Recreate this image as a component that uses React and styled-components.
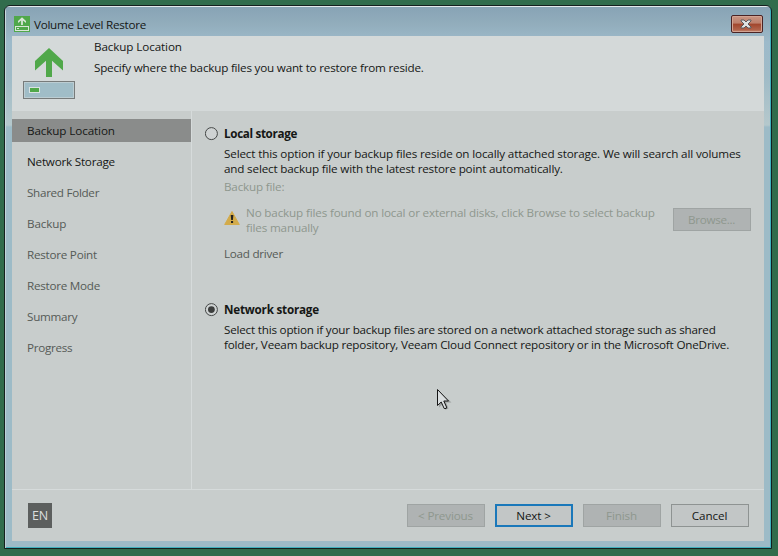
import React from "react";
import styled, { createGlobalStyle } from "styled-components";

const GlobalStyle = createGlobalStyle`
  * { box-sizing: border-box; }
  body {
    margin: 0;
    background: #316c4c;
    color: #151715;
    font: 11.68px/15px "Open Sans", "Noto Sans", sans-serif;
    overflow: hidden;
  }
`;

const Desktop = styled.main`
  height: 556px;
  padding: 5px 6px 7px 4px;
`;

const Window = styled.section`
  display: flex;
  flex-direction: column;
  width: 768px;
  height: 544px;
  padding: 1px 7px 7px;
  border: 1px solid #14201f;
  border-radius: 6px 6px 0 0;
  background:
    linear-gradient(#e3e8ea, #e3e8ea) 0 0 / 100% 1px no-repeat,
    linear-gradient(#c9d8dc, #b9cdd4) 0 0 / 1px 100% no-repeat,
    linear-gradient(#3fb0bd, #3fb0bd) 100% 0 / 1px 100% no-repeat,
    linear-gradient(#3fb0bd, #3fb0bd) 0 100% / 100% 1px no-repeat,
    linear-gradient(#87a3b5 0, #92adbc 18px, #9dbaca 36px, #9fbbc7 70px, #b5c8cc 119px, #9dbbc7 121px);
`;

const TitleBar = styled.header`
  display: flex;
  align-items: flex-start;
  height: 29px;
  padding: 9px 1px 0 2px;
`;

const Text = styled.span`
  display: block;
  white-space: nowrap;
  letter-spacing: ${(p) => p.$track || 0}px;
  font-weight: ${(p) => (p.$bold ? 700 : 400)};
`;

const WindowTitle = styled.h1`
  margin: 1px 0 0 4px;
  flex: 1;
  font: inherit;
`;

const CloseButton = styled.button`
  display: flex;
  align-items: center;
  justify-content: center;
  width: 32px;
  height: 18px;
  margin-top: -1px;
  padding: 0 2px 0 0;
  border: 1px solid #4a2324;
  border-radius: 2px;
  box-shadow: inset 0 0 0 1px #d3a493;
  background: linear-gradient(#c99583 0, #bd7f6b 45%, #a1452c 50%, #b0624a 85%, #c58a74 100%);
`;

const Client = styled.div`
  display: flex;
  flex-direction: column;
  flex: 1;
  width: 752px;
  background: #c8cdcc;
`;

const Banner = styled.div`
  display: flex;
  height: 75px;
  padding: 3px 0 0 11px;
  background: #d4d9d9;
`;

const BannerText = styled.div`
  display: flex;
  flex-direction: column;
  gap: 6px;
  margin-left: 19px;
`;

const Body = styled.div`
  display: grid;
  grid-template-columns: 180px 1fr;
  height: 378px;
`;

const Steps = styled.nav`
  display: flex;
  flex-direction: column;
  gap: 8px;
  padding: 8px 0 0;
  border-right: 1px solid #d6dbdb;
`;

const Step = styled.div`
  height: 23px;
  padding: 4px 0 0 15px;
  color: ${(p) => (p.$state === "todo" ? "#555a56" : "#151715")};
  background: ${(p) => (p.$state === "current" ? "#8a8c8b" : "transparent")};
`;

const Content = styled.div`
  padding: 15px 12px 0 13px;
`;

const Option = styled.div`
  display: grid;
  grid-template-columns: 19px 1fr;
  margin-top: ${(p) => p.$top || 0}px;
`;

const OptionBody = styled.div`
  display: flex;
  flex-direction: column;
`;

const Description = styled.div`
  margin-top: 5px;
`;

const FileLabel = styled.div`
  margin-top: 3px;
  color: #8e978e;
`;

const Notice = styled.div`
  display: flex;
  align-items: flex-start;
  margin-top: 11px;
  color: #8e978e;
`;

const NoticeText = styled.div`
  flex: 1;
  margin-left: 6px;
`;

const DriverLink = styled.div`
  margin-top: 11px;
  color: #555a56;
`;

const Footer = styled.footer`
  display: flex;
  align-items: flex-start;
  height: 52px;
  padding: 14px 15px 0 16px;
  border-top: 1px solid #d6dbdb;
`;

const Language = styled.div`
  width: 24px;
  height: 25px;
  margin: -1px auto 0 0;
  background: #5c5f5e;
  color: #dcdfdf;
  font-size: 12.5px;
  line-height: 25px;
  text-align: center;
`;

const Actions = styled.div`
  display: flex;
  gap: 10px;
`;

const palettes = {
  disabled: { border: "1px solid #9fa4a3", background: "#afb3b3", color: "#8e978e" },
  primary: { border: "2px solid #1a78ba", background: "#c2c6c6", color: "#151715" },
  normal: { border: "1px solid #8e9392", background: "#c2c6c6", color: "#151715" },
};

const Button = styled.button`
  display: flex;
  align-items: center;
  justify-content: center;
  width: 78px;
  height: 23px;
  margin: ${(p) => p.$offset || "0"};
  padding: 0 1px 1px 0;
  font: inherit;
  border: ${(p) => palettes[p.$kind].border};
  background: ${(p) => palettes[p.$kind].background};
  color: ${(p) => palettes[p.$kind].color};
`;

const BannerArt = styled.svg`
  display: block;
  margin-top: 8px;
`;

const NoticeIcon = styled.svg`
  display: block;
  margin-top: 5px;
`;

const RadioMark = styled.svg`
  display: block;
  margin-top: 1px;
`;

const Cursor = styled.svg`
  position: absolute;
  left: 436px;
  top: 388px;
`;

const AppIcon = () => (
  <svg width="16" height="16" viewBox="0 0 16 16">
    <rect width="16" height="16" fill="#50a84a" />
    <path d="M8 1.2 12 5v2L8.9 4.5V9H7.1V4.5L4 7V5z" fill="#d9e6d8" />
    <rect x="1.5" y="10.5" width="13" height="4" fill="none" stroke="#d9e6d8" />
    <rect x="3" y="12" width="2" height="1" fill="#d9e6d8" />
  </svg>
);

const DriveIcon = () => (
  <BannerArt width="52" height="52" viewBox="0 0 52 52">
    <path d="M26 1 40 14v9.500L29 13.800V30H23V13.800L12 23.500V14z" fill="#50a84a" />
    <rect x=".5" y="34.500" width="51" height="17" fill="#a0bdc7" stroke="#777b7a" />
    <rect x="1.500" y="35.500" width="49" height="15" fill="none" stroke="#bccdd2" />
    <rect x="6.500" y="40.500" width="10" height="5" fill="#50a84a" stroke="#d9e2e2" />
  </BannerArt>
);

const CloseGlyph = () => (
  <svg width="12" height="10" viewBox="0 0 12 10">
    <path d="M1 1h3l2 2 2-2h3v1L8 5l3 3v1H8L6 7 4 9H1V8l3-3-3-3z" fill="#dfe2e2" stroke="#5b5a5d" strokeWidth="1" />
  </svg>
);

const Radio = ({ checked }) => (
  <RadioMark width="14" height="14" viewBox="0 0 14 14">
    <circle cx="6.400" cy="6.600" r="6" fill="#cfd3d3" stroke="#454847" />
    {checked && <circle cx="6.400" cy="6.600" r="3.400" fill="#3c3e3d" />}
  </RadioMark>
);

const Warning = () => (
  <NoticeIcon width="16" height="16" viewBox="0 0 16 16">
    <path d="M8 1.500 15.300 14.500H.7z" fill="#d3ab4a" stroke="#d3ab4a" strokeLinejoin="round" />
    <path d="M6.700 5h2.700L8.900 10H7.200zM7 11h2.100v2H7z" fill="#242420" />
  </NoticeIcon>
);

const Pointer = () => (
  <Cursor width="18" height="25" viewBox="0 0 18 25">
    <path d="M3 3v16.500l4-3.800 2.500 6 3-1.200-2.500-6h5.500z" fill="#000" opacity=".22" />
    <path d="M1.500 1.500v16l3.700-3.500 3 6.500h2l.3-1.500-2.700-6h4.700z" fill="#dadedf" stroke="#151515" />
  </Cursor>
);

const steps = [
  { label: "Backup Location", state: "current", track: -0.11 },
  { label: "Network Storage", state: "ready", track: -0.22 },
  { label: "Shared Folder", state: "todo", track: -0.3 },
  { label: "Backup", state: "todo", track: -0.13 },
  { label: "Restore Point", state: "todo", track: -0.25 },
  { label: "Restore Mode", state: "todo", track: -0.26 },
  { label: "Summary", state: "todo", track: -0.27 },
  { label: "Progress", state: "todo", track: -0.29 },
];

export default function App() {
  return (
    <Desktop>
      <GlobalStyle />
      <Window>
        <TitleBar>
          <AppIcon />
          <WindowTitle><Text $track={-0.27}>Volume Level Restore</Text></WindowTitle>
          <CloseButton aria-label="Close"><CloseGlyph /></CloseButton>
        </TitleBar>
        <Client>
          <Banner>
            <DriveIcon />
            <BannerText>
              <Text $track={-0.11}>Backup Location</Text>
              <Text $track={-0.21}>Specify where the backup files you want to restore from reside.</Text>
            </BannerText>
          </Banner>
          <Body>
            <Steps>
              {steps.map((s) => (
                <Step key={s.label} $state={s.state}><Text $track={s.track}>{s.label}</Text></Step>
              ))}
            </Steps>
            <Content>
              <Option>
                <Radio />
                <OptionBody>
                  <Text $bold $track={-0.34}>Local storage</Text>
                  <Description>
                    <Text $track={-0.15}>Select this option if your backup files reside on locally attached storage. We will search all volumes</Text>
                    <Text $track={-0.175}>and select backup file with the latest restore point automatically.</Text>
                  </Description>
                  <FileLabel><Text $track={-0.18}>Backup file:</Text></FileLabel>
                  <Notice>
                    <Warning />
                    <NoticeText>
                      <Text $track={-0.158}>No backup files found on local or external disks, click Browse to select backup</Text>
                      <Text $track={-0.165}>files manually</Text>
                    </NoticeText>
                    <Button $kind="disabled" $offset="3px 1px -3px 0"><Text $track={-0.29}>Browse...</Text></Button>
                  </Notice>
                  <DriverLink><Text $track={-0.26}>Load driver</Text></DriverLink>
                </OptionBody>
              </Option>
              <Option $top={41}>
                <Radio checked />
                <OptionBody>
                  <Text $bold $track={-0.22}>Network storage</Text>
                  <Description>
                    <Text $track={-0.21}>Select this option if your backup files are stored on a network attached storage such as shared</Text>
                    <Text $track={-0.193}>folder, Veeam backup repository, Veeam Cloud Connect repository or in the Microsoft OneDrive.</Text>
                  </Description>
                </OptionBody>
              </Option>
            </Content>
          </Body>
          <Footer>
            <Language><Text $track={-0.3}>EN</Text></Language>
            <Actions>
              <Button $kind="disabled"><Text $track={-0.16}>&lt; Previous</Text></Button>
              <Button $kind="primary"><Text $track={-0.15}>Next &gt;</Text></Button>
              <Button $kind="disabled"><Text $track={-0.15}>Finish</Text></Button>
              <Button $kind="normal"><Text $track={-0.1}>Cancel</Text></Button>
            </Actions>
          </Footer>
        </Client>
      </Window>
      <Pointer />
    </Desktop>
  );
}
